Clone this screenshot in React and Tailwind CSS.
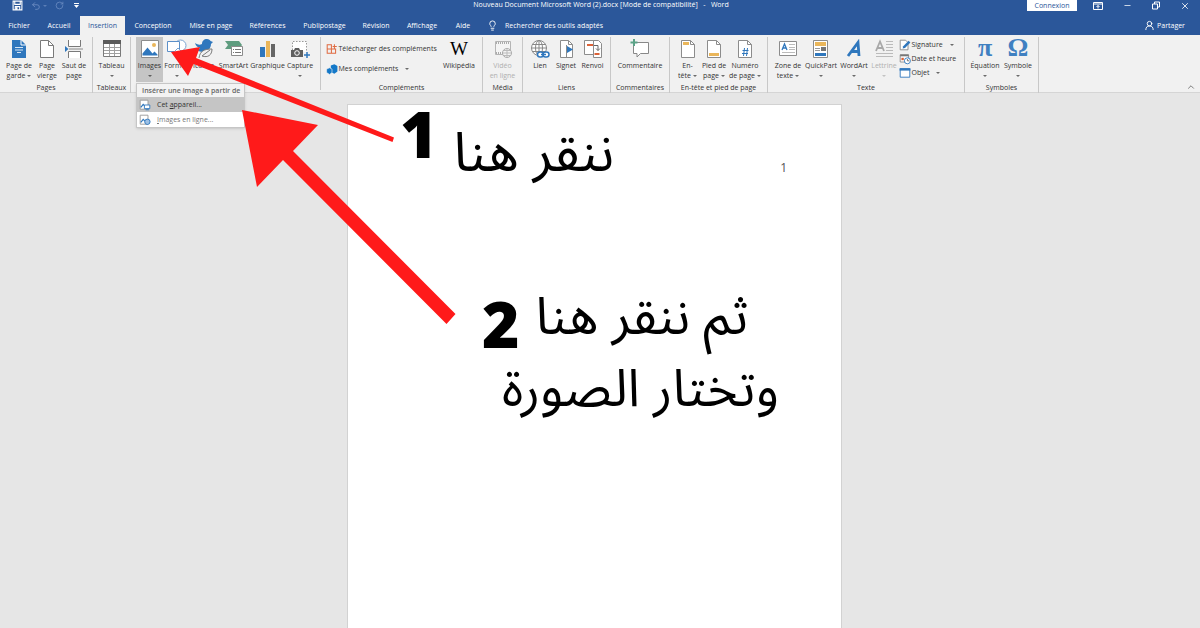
import { ChevronUp, Lightbulb, Minus, RotateCw, Undo2, UserRound, X } from "lucide-react";

const BLUE = "#2f77bd";
const GRAY = "#7a7a7a";

function Icon({ children, size = 20 }) {
    return (
        <svg width={size} height={size} viewBox="0 0 20 20" fill="none" aria-hidden="true" className="shrink-0">
            {children}
        </svg>
    );
}

const icons = {
    save: (
        <Icon size={11}>
            <path d="M2 2h16v16H2z" stroke="#fff" strokeWidth="2" />
            <path d="M5 2v6h10V2M6 18v-6h8v6" stroke="#fff" strokeWidth="2" />
            <path d="M7 13h3v5H7z" fill="#fff" />
        </Icon>
    ),
    cover: (
        <Icon>
            <path d="M3 1h9l5 5v13H3z" fill={BLUE} />
            <path d="M12 1v5h5" stroke="#fff" />
            <path d="M6 8.500h8M6 11h8M8 13.500h4" stroke="#d5e5f5" />
        </Icon>
    ),
    blank: (
        <Icon>
            <path d="M3.500 1.500h8l5 5v12h-13z" fill="#fff" stroke={GRAY} />
            <path d="M11.500 1.500v5h5" stroke={GRAY} />
        </Icon>
    ),
    pageBreak: (
        <Icon>
            <path d="M4.500 1v6.500h12V1M4.500 19v-6.500h12V19" fill="#fff" stroke={GRAY} />
            <path d="M5 10h14" stroke="#8a8a8a" />
            <path d="M1 7l3.500 3L1 13z" fill={BLUE} />
        </Icon>
    ),
    table: (
        <Icon>
            <path d="M1.500 1.500h17v16h-17z" fill="#fff" stroke={GRAY} />
            <path d="M1 1h18v4H1z" fill="#5c5c5c" />
            <path d="M2 8.500h16M2 11.500h16M2 14.500h16M7.500 5v12M12.500 5v12" stroke="#a0a0a0" />
        </Icon>
    ),
    picture: (
        <Icon>
            <path d="M1.500 1.500h17v17h-17z" fill="#fff" stroke="#8c8c8c" />
            <path d="M2.500 16.500v-2l5-6 5 6 2-2 3 3v1z" fill={BLUE} />
            <circle cx="14" cy="6" r="2" fill="#eab65a" />
        </Icon>
    ),
    shapes: (
        <Icon>
            <circle cx="13.500" cy="6.500" r="5.500" fill="#fff" stroke="#7ba5d3" />
            <path d="M.5 2.500h12v10H.5z" fill="#fff" stroke="#5b8fc8" />
            <path d="M11 9l5 5-5 5-5-5z" fill="#fff" stroke="#7ba5d3" />
        </Icon>
    ),
    iconSet: (
        <Icon>
            <path d="M1 4c3 2 5 2 7 1 0-3 2-5 5-5 2 0 3 1 3.500 2L19 3l-2 2c0 5-4 8-8 8-3 0-5-1-7-3 2 0 3 0 4-1-3-1-4-2-5-5z" fill={BLUE} />
            <path d="M5 19c1-7 5-9 13-9 0 6-4 9-10 7l8-6" fill="#f1f1f1" stroke={GRAY} />
        </Icon>
    ),
    smartArt: (
        <Icon>
            <path d="M1 2h14l3 4-3 4H1l3-4z" fill="#5f9c7f" />
            <path d="M7.500 7.500h11v9h-11z" fill="#fff" stroke="#8c8c8c" />
            <path d="M9 10.500h1M11 10.500h6M9 13.500h1M11 13.500h6" stroke="#777" />
        </Icon>
    ),
    chart: (
        <Icon>
            <path d="M2 8h5v10H2z" fill={BLUE} />
            <path d="M8 2h4v16H8z" fill="#eab65a" />
            <path d="M13 5h4v13h-4z" fill="#666" />
        </Icon>
    ),
    screenshot: (
        <Icon>
            <path d="M2.500 11V2.500h14V13" fill="#fff" stroke="#999" strokeDasharray="1.500 1.500" />
            <path d="M1 11h3l1-2h4l1 2h3v7H1z" fill="#5f5f5f" />
            <circle cx="7" cy="14" r="2.300" stroke="#fff" />
            <path d="M17 13v6M14 16h6" stroke={BLUE} strokeWidth="1.500" />
        </Icon>
    ),
    video: (
        <Icon>
            <path d="M2.500 2.500h15v13h-15z" fill="#f4f4f4" stroke="#b5b5b5" />
            <path d="M3 4h14M3 14h14" stroke="#aaa" strokeWidth="2" strokeDasharray="1 1" />
            <circle cx="14" cy="14" r="4.500" fill="#f4f4f4" stroke="#aaa" />
            <path d="M10 14h8M14 9.500v9M11 11.500h6M11 16.500h6" stroke="#bbb" />
        </Icon>
    ),
    link: (
        <Icon>
            <circle cx="9" cy="9" r="7.500" fill="#fff" stroke="#888" />
            <ellipse cx="9" cy="9" rx="3.500" ry="7.500" stroke="#888" />
            <path d="M1.500 9h15M3 5.500h12M3 12.500h12M9 1.500v15" stroke="#888" />
            <rect x="7.500" y="13" width="6" height="5" rx="2.500" fill="#fff" stroke={BLUE} strokeWidth="1.500" />
            <rect x="13" y="13" width="6" height="5" rx="2.500" fill="#fff" stroke={BLUE} strokeWidth="1.500" />
            <path d="M11 15.500h5" stroke={BLUE} strokeWidth="1.500" />
        </Icon>
    ),
    bookmark: (
        <Icon>
            <path d="M4.500 1.500h8l4 4v13h-12z" fill="#fff" stroke="#8c8c8c" />
            <path d="M12.500 1.500v4h4M10.500 6v13" stroke="#8c8c8c" />
            <path d="M11 7l6 3.500-6 3.500z" fill={BLUE} />
        </Icon>
    ),
    crossRef: (
        <Icon>
            <path d="M1.500 1.500h11v14h-11z" fill="#fff" stroke="#8c8c8c" />
            <path d="M10.500 1.500h5l3 3v14h-8z" fill="#fff" stroke="#8c8c8c" />
            <path d="M4 6h6M11.500 15h5" stroke="#dc6339" strokeWidth="2" />
            <path d="M11 6.500h4v5M13 9.500l2 2 2-2" stroke="#666" />
        </Icon>
    ),
    comment: (
        <Icon>
            <path d="M3.500 3.500h15v11h-8L7 18v-3.500H3.500z" fill="#fff" stroke="#888" />
            <path d="M4 0v7M.5 3.500h7" stroke="#5ba287" strokeWidth="2" />
        </Icon>
    ),
    header: (
        <Icon>
            <path d="M3.500 1.500h9l4 4v13h-13z" fill="#fff" stroke="#8c8c8c" />
            <path d="M12.500 1.500v4h4" stroke="#8c8c8c" />
            <path d="M5 3h6v3H5z" fill="#eab65a" />
        </Icon>
    ),
    footer: (
        <Icon>
            <path d="M3.500 1.500h9l4 4v13h-13z" fill="#fff" stroke="#8c8c8c" />
            <path d="M12.500 1.500v4h4" stroke="#8c8c8c" />
            <path d="M5 14h10v3H5z" fill="#eab65a" />
        </Icon>
    ),
    pageNumber: (
        <Icon>
            <path d="M3.500 1.500h9l4 4v13h-13z" fill="#fff" stroke="#8c8c8c" />
            <path d="M12.500 1.500v4h4" stroke="#8c8c8c" />
            <path d="M9.500 9l-1 8M12.500 9l-1 8M7.500 11.500h6M7 14.500h6" stroke={BLUE} />
        </Icon>
    ),
    textBox: (
        <Icon>
            <path d="M1.500 2.500h17v14h-17z" fill="#fff" stroke="#8c8c8c" />
            <path d="M4 11l2.500-6L9 11M5 9h3" stroke={BLUE} strokeWidth="1.300" />
            <path d="M11 5.500h6M11 8.500h6M11 10.500h6M4 13.500h13" stroke="#bbb" />
        </Icon>
    ),
    quickPart: (
        <Icon>
            <path d="M2.500 1.500h14v17h-14z" fill="#fff" stroke="#8c8c8c" />
            <path d="M4 3h11v4H4z" fill="#eab65a" />
            <path d="M4 9.500h5M4 11.500h5" stroke="#999" />
            <path d="M10 8h5v4h-5z" fill="#777" />
            <path d="M4 14h11v3H4z" fill={BLUE} />
        </Icon>
    ),
    wordArt: (
        <Icon>
            <path d="M4 17L14 3.500l1 13.500M8 12.500h6.500" stroke={BLUE} strokeWidth="2.800" />
        </Icon>
    ),
    dropCap: (
        <Icon>
            <path d="M2 12L6 2.500 10 12M3.500 9h5" stroke="#a8a8a8" strokeWidth="1.800" />
            <path d="M12 2.500h7M12 5.500h7M12 8.500h7M12 11.500h7M2 14.500h17M2 17.500h17" stroke="#bbb" />
        </Icon>
    ),
    addinStore: (
        <Icon size={12}>
            <path d="M2 3h7v14H2zM2 10h14v7H9M9 3v14M11 6h7M14 2v8" stroke="#e06a40" strokeWidth="1.700" />
        </Icon>
    ),
    myAddins: (
        <Icon size={12}>
            <path d="M8 4l6-2 5 3v9l-5 4-6-3z" fill="#1478c8" />
            <path d="M1 10l5-2 4 2v6l-4 3-5-3z" fill="#1478c8" stroke="#f1f1f1" />
        </Icon>
    ),
    signature: (
        <Icon size={12}>
            <path d="M2 2h9l4 4v12H2z" fill="#fff" stroke="#888" strokeWidth="1.500" />
            <path d="M6 16l1-4 9-9 3 3-9 9z" fill={BLUE} />
        </Icon>
    ),
    dateTime: (
        <Icon size={12}>
            <path d="M2 3h14v12H2z" fill="#fff" stroke="#888" strokeWidth="1.500" />
            <path d="M2 4h14" stroke="#777" strokeWidth="3" />
            <path d="M4 8h4v4H4z" fill="#dc6339" />
            <circle cx="14" cy="13" r="5" fill="#fff" stroke={BLUE} strokeWidth="1.500" />
            <path d="M14 10v3h3" stroke="#666" strokeWidth="1.500" />
        </Icon>
    ),
    object: (
        <Icon size={12}>
            <path d="M2 3h16v14H2z" fill="#fff" stroke={BLUE} strokeWidth="1.500" />
            <path d="M1 2h18v4H1z" fill={BLUE} />
        </Icon>
    ),
    device: (
        <Icon size={12}>
            <path d="M2 2h13v15H2z" fill="#fff" stroke="#999" strokeWidth="1.500" />
            <path d="M3 14l4-5 4 4" stroke={BLUE} strokeWidth="2" />
            <path d="M9 10h9v6H9zM11 18h6" fill="#fff" stroke={BLUE} strokeWidth="1.500" />
        </Icon>
    ),
    online: (
        <Icon size={12}>
            <path d="M2 2h13v15H2z" fill="#fff" stroke="#999" strokeWidth="1.500" />
            <path d="M3 14l4-5 3 3" stroke={BLUE} strokeWidth="2" />
            <circle cx="14" cy="13" r="4.500" fill="#9dc0e4" stroke={BLUE} strokeWidth="1.500" />
        </Icon>
    ),
};

const tabs = [
    { name: "Fichier", width: "w-[38px]" },
    { name: "Accueil", width: "w-[42px]" },
    { name: "Insertion", width: "w-[45px]", active: true },
    { name: "Conception", width: "w-[56px]" },
    { name: "Mise en page", width: "w-[60px]" },
    { name: "Références", width: "w-[53px]" },
    { name: "Publipostage", width: "w-[61px]" },
    { name: "Révision", width: "w-[42px]" },
    { name: "Affichage", width: "w-[50px]" },
    { name: "Aide", width: "w-[32px]" },
];

function Caret() {
    return (
        <svg width="4" height="2" viewBox="0 0 4 2" aria-hidden="true" className="inline-block shrink-0 opacity-70">
            <path d="M0 0h4L2 2z" fill="currentColor" />
        </svg>
    );
}

function Group({ label, width, children }) {
    return (
        <section aria-label={label} className={`flex shrink-0 flex-col ${width}`}>
            <div className="my-0.5 flex grow flex-col border-r border-[#c8c8c8] pt-0.5">
                <div className="flex h-11 justify-center">{children}</div>
                <div className="text-center">{label}</div>
            </div>
        </section>
    );
}

function BigButton({ icon, lines, width, caret, disabled, active }) {
    return (
        <button
            type="button"
            disabled={disabled}
            className={`flex shrink-0 flex-col items-center whitespace-nowrap ${width} ${active ? "-mt-0.5 h-[45px] bg-[#c5c5c5] pt-0.5" : ""} ${disabled ? "text-[#b0b0b0]" : ""}`}
        >
            <span className="flex h-[22px] items-start justify-center">{icon}</span>
            {lines.map((line, i) => (
                <span key={line} className="flex items-center gap-0.5">
                    {line}
                    {caret && lines.length > 1 && i === lines.length - 1 && <Caret />}
                </span>
            ))}
            {caret && lines.length === 1 && <span className="flex h-[10px] items-center"><Caret /></span>}
        </button>
    );
}

function SmallButton({ icon, label, caret }) {
    return (
        <button type="button" className="flex items-center gap-px whitespace-nowrap">
            {icon}
            <span>{label}</span>
            {caret && <span className="ml-1.5 flex"><Caret /></span>}
        </button>
    );
}

function Glyph({ children }) {
    return <span className="font-['Liberation_Serif',serif] text-[26px] leading-[18px] font-bold text-[#3f80c1]">{children}</span>;
}

function ImagesMenu() {
    return (
        <div role="menu" className="absolute top-full left-0 z-10 w-[109px] border border-[#c6c6c6] bg-white shadow-sm">
            <div className="h-[13px] overflow-hidden bg-[#f3f3f3] pl-[5px] leading-[13px] font-semibold whitespace-nowrap text-[#666]">
                Insérer une image à partir de
            </div>
            <button type="button" role="menuitem" className="flex h-[15px] w-full items-center gap-1.5 bg-[#c5c5c5] pl-[2px]">
                {icons.device}
                <span>Cet <u>a</u>ppareil...</span>
            </button>
            <button type="button" role="menuitem" className="flex h-[15px] w-full items-center gap-1.5 pl-[2px] text-[#777]">
                {icons.online}
                <span><u>I</u>mages en ligne...</span>
            </button>
        </div>
    );
}

function TitleBar() {
    return (
        <div className="flex h-4 items-start text-white">
            <div className="flex flex-1 items-center gap-2 pl-3">
                <button type="button" aria-label="Enregistrer">{icons.save}</button>
                <button type="button" aria-label="Annuler" className="flex items-center gap-0.5 text-[#6f8fc4]">
                    <Undo2 size={10} />
                    <Caret />
                </button>
                <button type="button" aria-label="Rétablir" className="text-[#6f8fc4]"><RotateCw size={9} /></button>
                <button type="button" aria-label="Personnaliser" className="ml-0.5">
                    <svg width="5" height="5" viewBox="0 0 5 5" fill="currentColor">
                        <path d="M0 0h5v1H0zM0 2h5L2.500 5z" />
                    </svg>
                </button>
            </div>
            <div className="whitespace-pre">Nouveau Document Microsoft Word (2).docx [Mode de compatibilité]   -   Word</div>
            <div className="flex flex-1 items-center justify-end gap-5 pr-2.5">
                <button type="button" className="h-[11px] w-[50px] bg-white text-[#2b579a]">Connexion</button>
                <button type="button" aria-label="Options du ruban" className="-ml-1">
                    <svg width="10" height="10" viewBox="0 0 10 10" fill="none" stroke="currentColor">
                        <path d="M.5 1.500h9v7h-9zM1 3h8M5 7.500V4.500M3.500 6L5 4.500 6.500 6" />
                    </svg>
                </button>
                <button type="button" aria-label="Réduire"><Minus size={9} /></button>
                <button type="button" aria-label="Restaurer">
                    <svg width="8" height="9" viewBox="0 0 8 9" fill="none" stroke="currentColor">
                        <path d="M.5 3h5v5h-5zM2.500 3V1h5v5h-2" />
                    </svg>
                </button>
                <button type="button" aria-label="Fermer"><X size={10} /></button>
            </div>
        </div>
    );
}

function TabBar() {
    return (
        <nav className="flex h-[19px] items-stretch text-white">
            {tabs.map((tab) => (
                <button
                    key={tab.name}
                    type="button"
                    className={`shrink-0 whitespace-nowrap ${tab.width} ${tab.active ? "bg-[#f1f1f1] text-[#2b579a]" : ""}`}
                >
                    {tab.name}
                </button>
            ))}
            <button type="button" className="ml-2 flex items-center gap-[7px] whitespace-nowrap">
                <Lightbulb size={11} />
                Rechercher des outils adaptés
            </button>
            <button type="button" className="mr-[15px] ml-auto flex items-center gap-0.5">
                <UserRound size={11} />
                Partager
            </button>
        </nav>
    );
}

function Ribbon() {
    return (
        <div className="flex h-[58px] border-b border-[#d5d5d5] bg-[#f1f1f1] text-[#333]">
            <Group label="Pages" width="w-[93px]">
                <BigButton icon={icons.cover} lines={["Page de", "garde"]} width="w-[29px]" caret />
                <BigButton icon={icons.blank} lines={["Page", "vierge"]} width="w-[27px]" />
                <BigButton icon={icons.pageBreak} lines={["Saut de", "page"]} width="w-[27px]" />
            </Group>
            <Group label="Tableaux" width="w-[38px]">
                <BigButton icon={icons.table} lines={["Tableau"]} width="w-[36px]" caret />
            </Group>
            <Group label="" width="w-[190px]">
                <div className="relative">
                    <BigButton icon={icons.picture} lines={["Images"]} width="w-[27px]" caret active />
                    <ImagesMenu />
                </div>
                <BigButton icon={icons.shapes} lines={["Formes"]} width="w-[27px]" caret />
                <BigButton icon={icons.iconSet} lines={["Icônes"]} width="w-[27px]" />
                <BigButton icon={icons.smartArt} lines={["SmartArt"]} width="w-[33px]" />
                <BigButton icon={icons.chart} lines={["Graphique"]} width="w-[35px]" />
                <BigButton icon={icons.screenshot} lines={["Capture"]} width="w-[30px]" caret />
            </Group>
            <Group label="Compléments" width="w-[162px]">
                <div className="flex w-[115px] flex-col gap-2 pt-1">
                    <SmallButton icon={icons.addinStore} label="Télécharger des compléments" />
                    <SmallButton icon={icons.myAddins} label="Mes compléments" caret />
                </div>
                <BigButton
                    icon={<span className="font-['Liberation_Serif',serif] text-[19px] leading-5 text-black">W</span>}
                    lines={["Wikipédia"]}
                    width="w-[37px]"
                />
            </Group>
            <Group label="Média" width="w-[40px]">
                <BigButton icon={icons.video} lines={["Vidéo", "en ligne"]} width="w-[36px]" disabled />
            </Group>
            <Group label="Liens" width="w-[88px]">
                <BigButton icon={icons.link} lines={["Lien"]} width="w-[26px]" />
                <BigButton icon={icons.bookmark} lines={["Signet"]} width="w-[26px]" />
                <BigButton icon={icons.crossRef} lines={["Renvoi"]} width="w-[27px]" />
            </Group>
            <Group label="Commentaires" width="w-[59px]">
                <BigButton icon={icons.comment} lines={["Commentaire"]} width="w-[54px]" />
            </Group>
            <Group label="En-tête et pied de page" width="w-[98px]">
                <BigButton icon={icons.header} lines={["En-", "tête"]} width="w-[25px]" caret />
                <BigButton icon={icons.footer} lines={["Pied de", "page"]} width="w-[28px]" caret />
                <BigButton icon={icons.pageNumber} lines={["Numéro", "de page"]} width="w-[34px]" caret />
            </Group>
            <Group label="Texte" width="w-[197px]">
                <BigButton icon={icons.textBox} lines={["Zone de", "texte"]} width="w-[31px]" caret />
                <BigButton icon={icons.quickPart} lines={["QuickPart"]} width="w-[35px]" caret />
                <BigButton icon={icons.wordArt} lines={["WordArt"]} width="w-[31px]" caret />
                <BigButton icon={icons.dropCap} lines={["Lettrine"]} width="w-[29px]" caret disabled />
                <div className="flex w-[61px] flex-col gap-0.5">
                    <SmallButton icon={icons.signature} label="Signature" caret />
                    <SmallButton icon={icons.dateTime} label="Date et heure" />
                    <SmallButton icon={icons.object} label="Objet" caret />
                </div>
            </Group>
            <Group label="Symboles" width="w-[74px]">
                <BigButton icon={<Glyph>π</Glyph>} lines={["Équation"]} width="w-[33px]" caret />
                <BigButton icon={<Glyph>Ω</Glyph>} lines={["Symbole"]} width="w-[33px]" caret />
            </Group>
            <button type="button" aria-label="Réduire le ruban" className="mr-1 ml-auto self-end text-[#666]">
                <ChevronUp size={10} />
            </button>
        </div>
    );
}

function StepNumber({ children }) {
    return <span className="font-['Open_Sans',sans-serif] text-[64px] leading-[58px] font-extrabold">{children}</span>;
}

function Document() {
    return (
        <article className="flex w-[495px] grow flex-col border border-b-0 border-[#d2d2d2] bg-white pl-[52px] font-['Noto_Sans_Arabic','DejaVu_Sans',sans-serif] text-black">
            <div className="flex items-start justify-between pr-[54px]">
                <div className="flex items-start gap-4">
                    <StepNumber>1</StepNumber>
                    <p dir="rtl" lang="ar" className="pt-[13px] text-[54px] leading-[72px] whitespace-nowrap">ننقر هنا</p>
                </div>
                <span className="pt-[58px] font-['Open_Sans',sans-serif] text-[12px] text-[#555]">1</span>
            </div>
            <div className="mt-[92px] pl-[82px]">
                <div className="flex items-start gap-4">
                    <div className="pt-[13px]">
                        <StepNumber>2</StepNumber>
                    </div>
                    <p dir="rtl" lang="ar" className="text-[52px] leading-[72px] whitespace-nowrap">ثم ننقر هنا</p>
                </div>
                <p dir="rtl" lang="ar" className="w-fit pl-5 text-[52px] leading-[72px] whitespace-nowrap">وتختار الصورة</p>
            </div>
        </article>
    );
}

function Arrows() {
    return (
        <svg width="480" height="340" viewBox="0 0 480 340" fill="#ff1a1a" aria-hidden="true" className="pointer-events-none absolute top-0 left-0 z-20">
            <path d="M171 52L200 47 196 58 394 137.500 392.500 142 193.500 64 188 76z" />
            <path d="M242 110L318 125 293 151 455.500 314 446.500 324 283 160 257 187z" />
        </svg>
    );
}

export default function App() {
    return (
        <div className="relative flex min-h-screen flex-col overflow-hidden bg-[#e6e6e6] font-['Open_Sans',sans-serif] text-[7px] leading-[10px]">
            <header>
                <div className="bg-[#2b579a]">
                    <TitleBar />
                    <TabBar />
                </div>
                <Ribbon />
            </header>
            <main className="flex grow flex-col items-center pt-[11px] pr-[11px]">
                <Document />
            </main>
            <Arrows />
        </div>
    );
}
